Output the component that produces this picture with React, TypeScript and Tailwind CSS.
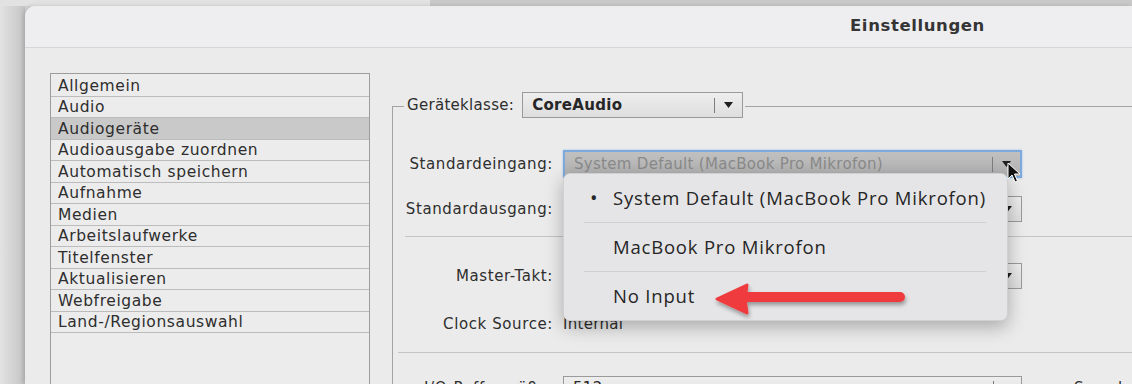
import React from 'react'

const LIST = [
  'Allgemein',
  'Audio',
  'Audiogeräte',
  'Audioausgabe zuordnen',
  'Automatisch speichern',
  'Aufnahme',
  'Medien',
  'Arbeitslaufwerke',
  'Titelfenster',
  'Aktualisieren',
  'Webfreigabe',
  'Land-/Regionsauswahl',
]

function Caret() {
  return (
    <svg width="9" height="6" viewBox="0 0 9 6">
      <polygon points="0,0 9,0 4.5,6" fill="#1f1f1f" />
    </svg>
  )
}

function Dropdown({ text, width, height = 26, bold, focused }: { text: string; width: number; height?: number; bold?: boolean; focused?: boolean }) {
  return (
    <div
      className={
        focused
          ? 'flex items-center border-2 border-[#7ea9dc] bg-gradient-to-b from-[#c0c0c0] to-[#b1b1b1] shadow-[0_0_2px_#9cc0ea]'
          : 'flex items-center border border-[#9a9a9a] bg-gradient-to-b from-[#eeeeee] to-[#dedede]'
      }
      style={{ width, height }}
    >
      <span className={`flex-1 pl-[9px] truncate ${focused ? 'text-[#8a8a8a]' : 'text-[#262626]'} ${bold ? 'font-semibold' : ''}`}>{text}</span>
      <div className="flex items-center h-full w-[28px]">
        <div className="h-[15px] w-px bg-[#7d7d7d]" />
        <div className="flex-1 flex justify-center">
          <Caret />
        </div>
      </div>
    </div>
  )
}

function Row({ label, children, mt }: { label: string; children?: React.ReactNode; mt: string }) {
  return (
    <div className={`flex items-center ${mt}`}>
      <div className="w-[160px] shrink-0 text-right whitespace-nowrap tracking-[0.6px]">{label}</div>
      <div className="ml-[10px] flex items-center">{children}</div>
    </div>
  )
}

export default function App() {
  return (
    <div className="relative w-[1132px] h-[384px] overflow-hidden bg-[#d6d6d6] text-[15px] tracking-[0.3px] text-[#2e2e2e]" style={{ fontFamily: '"DejaVu Sans", sans-serif' }}>
      <div className="flex h-[6px]">
        <div className="w-[430px] bg-[#e2e2e2]" />
        <div className="flex-1 bg-[#c9c9c9]" />
      </div>
      <div className="flex h-[378px]">
        <div className="w-[25px] shrink-0 bg-gradient-to-r from-[#e3e3e3] to-[#c4c4c4]" />
        <div className="flex-1 flex flex-col rounded-tl-[10px] overflow-hidden bg-[#ebebeb] shadow-[-2px_0_4px_rgba(0,0,0,0.15)]">
          <div className="h-[42px] shrink-0 bg-[#eeeef0] border-b border-[#d6d6d6] flex items-center">
            <div className="ml-[825px] text-[16.5px] font-bold tracking-[0.6px] text-[#353535]">Einstellungen</div>
          </div>
          <div className="flex flex-1 pl-[25px] pt-[25px]">
            <div className="w-[320px] shrink-0 border border-[#9c9c9c] bg-[#ececec] self-stretch pt-[1px]">
              {LIST.map((item, i) => (
                <div
                  key={item}
                  className={`h-[21.5px] border-b border-[#bcbcbc] pl-[7px] pt-[2px] flex items-center text-[15.5px] tracking-[0.6px] leading-none whitespace-nowrap ${i === 2 ? 'bg-[#c9c9c9]' : ''}`}
                >
                  {item}
                </div>
              ))}
            </div>

            <div className="ml-[22px] flex-1 min-w-0 flex flex-col mt-[19px]">
              <div className="flex h-[26px] items-center">
                <div className="w-[12px] self-stretch flex flex-col">
                  <div className="h-[14px]" />
                  <div className="flex-1 border-l border-t border-[#a3a3a3]" />
                </div>
                <div className="ml-[3px] whitespace-nowrap">Geräteklasse:</div>
                <div className="ml-[8px]">
                  <Dropdown text="CoreAudio" width={221} bold />
                </div>
                <div className="flex-1 h-px bg-[#a3a3a3] ml-[2px] mt-[2px]" />
              </div>

              <div className="flex-1 border-l border-[#a3a3a3] flex flex-col">
                <Row label="Standardeingang:" mt="mt-[32px]">
                  <Dropdown text="System Default (MacBook Pro Mikrofon)" width={459} height={28} focused />
                </Row>
                {/* the selects below sit under the open menu, their values are hidden */}
                <Row label="Standardausgang:" mt="mt-[18px]">
                  <Dropdown text="" width={459} />
                </Row>
                <div className="mt-[14px] ml-[12px] h-px bg-[#c4c4c4]" />
                <Row label="Master-Takt:" mt="mt-[26px]">
                  <Dropdown text="" width={459} />
                </Row>
                <Row label="Clock Source:" mt="mt-[24px]">
                  <span>Internal</span>
                </Row>
                <div className="mt-[16px] ml-[5px] h-px bg-[#c4c4c4]" />
                <Row label="I/O-Puffergröße:" mt="mt-[23px]">
                  <Dropdown text="512" width={459} />
                  <span className="ml-[52px] whitespace-nowrap">Samples</span>
                </Row>
              </div>
            </div>
          </div>
        </div>
      </div>

      {/* popup menu */}
      <div
        className="absolute left-[563px] top-[173px] w-[445px] h-[148px] rounded-[7px] bg-[#e5e5e7] shadow-[0_6px_18px_rgba(0,0,0,0.28)] border border-[#d0d0d2] text-[18.5px] tracking-[0.8px] text-[#262626] px-[20px] flex flex-col"
        style={{ fontFamily: '"Open Sans", sans-serif' }}
      >
        <div className="h-[48px] flex items-center">
          <span className="w-[29px] shrink-0 pl-[6px] text-[20px] leading-none">•</span>
          <span className="whitespace-nowrap">System Default (MacBook Pro Mikrofon)</span>
        </div>
        <div className="h-px bg-[#cfcfd1] mr-[1px]" />
        <div className="h-[48px] flex items-center pl-[29px]">MacBook Pro Mikrofon</div>
        <div className="h-px bg-[#cfcfd1] mr-[1px]" />
        <div className="h-[48px] flex items-center pl-[29px]">No Input</div>
      </div>

      {/* red arrow */}
      <svg className="absolute left-[710px] top-[278px]" width="205" height="42" viewBox="0 0 205 42">
        <defs>
          <filter id="sh" x="-10%" y="-30%" width="120%" height="180%">
            <feDropShadow dx="1" dy="3" stdDeviation="2" floodColor="#000" floodOpacity="0.35" />
          </filter>
        </defs>
        <g filter="url(#sh)">
          <line x1="32" y1="19" x2="190" y2="19" stroke="#ef3b3d" strokeWidth="10" strokeLinecap="round" />
          <polygon points="7,21 37,7 35,21 37,35" fill="#ef3b3d" strokeLinejoin="round" stroke="#ef3b3d" strokeWidth="3" />
        </g>
      </svg>

      {/* cursor */}
      <svg className="absolute left-[1007px] top-[162px]" width="14" height="22" viewBox="0 0 14 22">
        <path d="M1 1 L1 17 L5 13 L8 20 L10.5 19 L7.5 12 L13 12 Z" fill="#111" stroke="#fff" strokeWidth="1" strokeLinejoin="round" />
      </svg>
    </div>
  )
}
